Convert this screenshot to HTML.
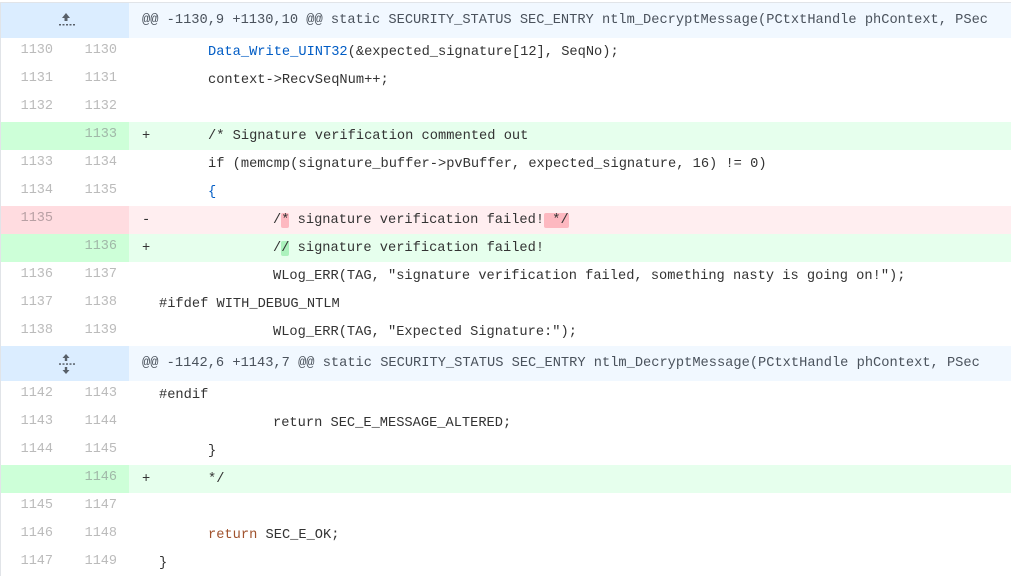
<!DOCTYPE html>
<html><head><meta charset="utf-8"><style>
body{margin:0;width:1011px;height:576px;overflow:hidden;background:#fff;font-family:"Liberation Mono",monospace;}
.wrap{position:absolute;left:0;top:2px;width:1011px;height:574px;border-left:1px solid #e1e4e8;border-top:1px solid #e1e4e8;box-sizing:border-box;}
.r{position:absolute;left:0;width:1011px;height:28px;}
.n{position:absolute;top:0;width:64px;height:100%;box-sizing:border-box;padding-right:12px;text-align:right;font-size:13.5px;line-height:25px;color:#bbb;}
.o{left:0}.w{left:64px}
.c{position:absolute;left:141px;top:0;font-size:13.7px;line-height:29px;color:#333;white-space:pre;}
.t{position:absolute;left:158px;top:0;font-size:13.7px;line-height:29px;color:#333;white-space:pre;}
.add{background:#e6ffed}.add .n{background:#cdffd8;color:#a0b8a8}
.del{background:#ffeef0}.del .n{background:#ffdce0;color:#b8a0a4}
.hd{background:#f1f8ff;height:35px}.hd .g{position:absolute;left:0;top:0;width:128px;height:35px;background:#dbedff}
.hd .c{line-height:36px;color:#4a525c}
.bl{color:#005cc5}.kw{color:#a0522d}
.hl-d{background:#fdb8c0;border-radius:2px}.hl-a{background:#acf2bd;border-radius:2px}
</style></head><body><div class="wrap">
<div class="r hd" style="top:0"><div class="g"><svg style="position:absolute;left:55px;top:8px" width="20" height="18"><path d="M10 2 L6 7 H8.5 V10 H11.5 V7 H14 Z" fill="#586069"/><g fill="#586069"><rect x="3" y="13" width="2" height="1.5"/><rect x="6.5" y="13" width="2" height="1.5"/><rect x="10" y="13" width="2" height="1.5"/><rect x="13.5" y="13" width="2" height="1.5"/><rect x="17" y="13" width="2" height="1.5"/></g></svg></div><div class="c">@@ -1130,9 +1130,10 @@ static SECURITY_STATUS SEC_ENTRY ntlm_DecryptMessage(PCtxtHandle phContext, PSec</div></div>
<div class="r" style="top:35px"><div class="n o">1130</div><div class="n w">1130</div><div class="t" style="left:207px"><span class="bl">Data_Write_UINT32</span>(&amp;expected_signature[12], SeqNo);</div></div>
<div class="r" style="top:63px"><div class="n o">1131</div><div class="n w">1131</div><div class="t" style="left:207px">context-&gt;RecvSeqNum++;</div></div>
<div class="r" style="top:91px"><div class="n o">1132</div><div class="n w">1132</div></div>
<div class="r add" style="top:119px"><div class="n o"></div><div class="n w">1133</div><div class="c">+</div><div class="t" style="left:207px">/* Signature verification commented out</div></div>
<div class="r" style="top:147px"><div class="n o">1133</div><div class="n w">1134</div><div class="t" style="left:207px">if (memcmp(signature_buffer-&gt;pvBuffer, expected_signature, 16) != 0)</div></div>
<div class="r" style="top:175px"><div class="n o">1134</div><div class="n w">1135</div><div class="t bl" style="left:207px">{</div></div>
<div class="r del" style="top:203px"><div class="n o">1135</div><div class="n w"></div><div class="c">-</div><div class="t" style="left:272px">/<span class="hl-d">*</span> signature verification failed!<span class="hl-d"> */</span></div></div>
<div class="r add" style="top:231px"><div class="n o"></div><div class="n w">1136</div><div class="c">+</div><div class="t" style="left:272px">/<span class="hl-a">/</span> signature verification failed!</div></div>
<div class="r" style="top:259px"><div class="n o">1136</div><div class="n w">1137</div><div class="t" style="left:272px">WLog_ERR(TAG, "signature verification failed, something nasty is going on!");</div></div>
<div class="r" style="top:287px"><div class="n o">1137</div><div class="n w">1138</div><div class="t">#ifdef WITH_DEBUG_NTLM</div></div>
<div class="r" style="top:315px"><div class="n o">1138</div><div class="n w">1139</div><div class="t" style="left:272px">WLog_ERR(TAG, "Expected Signature:");</div></div>
<div class="r hd" style="top:343px"><div class="g"><svg style="position:absolute;left:55px;top:7px" width="20" height="22"><path d="M10 1 L6.5 5 H8.8 V8 H11.2 V5 H13.5 Z M10 21 L6.5 17 H8.8 V14 H11.2 V17 H13.5 Z" fill="#586069"/><g fill="#586069"><rect x="3" y="10.3" width="2" height="1.5"/><rect x="6.5" y="10.3" width="2" height="1.5"/><rect x="10" y="10.3" width="2" height="1.5"/><rect x="13.5" y="10.3" width="2" height="1.5"/><rect x="17" y="10.3" width="2" height="1.5"/></g></svg></div><div class="c">@@ -1142,6 +1143,7 @@ static SECURITY_STATUS SEC_ENTRY ntlm_DecryptMessage(PCtxtHandle phContext, PSec</div></div>
<div class="r" style="top:378px"><div class="n o">1142</div><div class="n w">1143</div><div class="t">#endif</div></div>
<div class="r" style="top:406px"><div class="n o">1143</div><div class="n w">1144</div><div class="t" style="left:272px">return SEC_E_MESSAGE_ALTERED;</div></div>
<div class="r" style="top:434px"><div class="n o">1144</div><div class="n w">1145</div><div class="t" style="left:207px">}</div></div>
<div class="r add" style="top:462px"><div class="n o"></div><div class="n w">1146</div><div class="c">+</div><div class="t" style="left:207px">*/</div></div>
<div class="r" style="top:490px"><div class="n o">1145</div><div class="n w">1147</div></div>
<div class="r" style="top:518px"><div class="n o">1146</div><div class="n w">1148</div><div class="t" style="left:207px"><span class="kw">return</span> SEC_E_OK;</div></div>
<div class="r" style="top:546px"><div class="n o">1147</div><div class="n w">1149</div><div class="t">}</div></div>
</div></body></html>
